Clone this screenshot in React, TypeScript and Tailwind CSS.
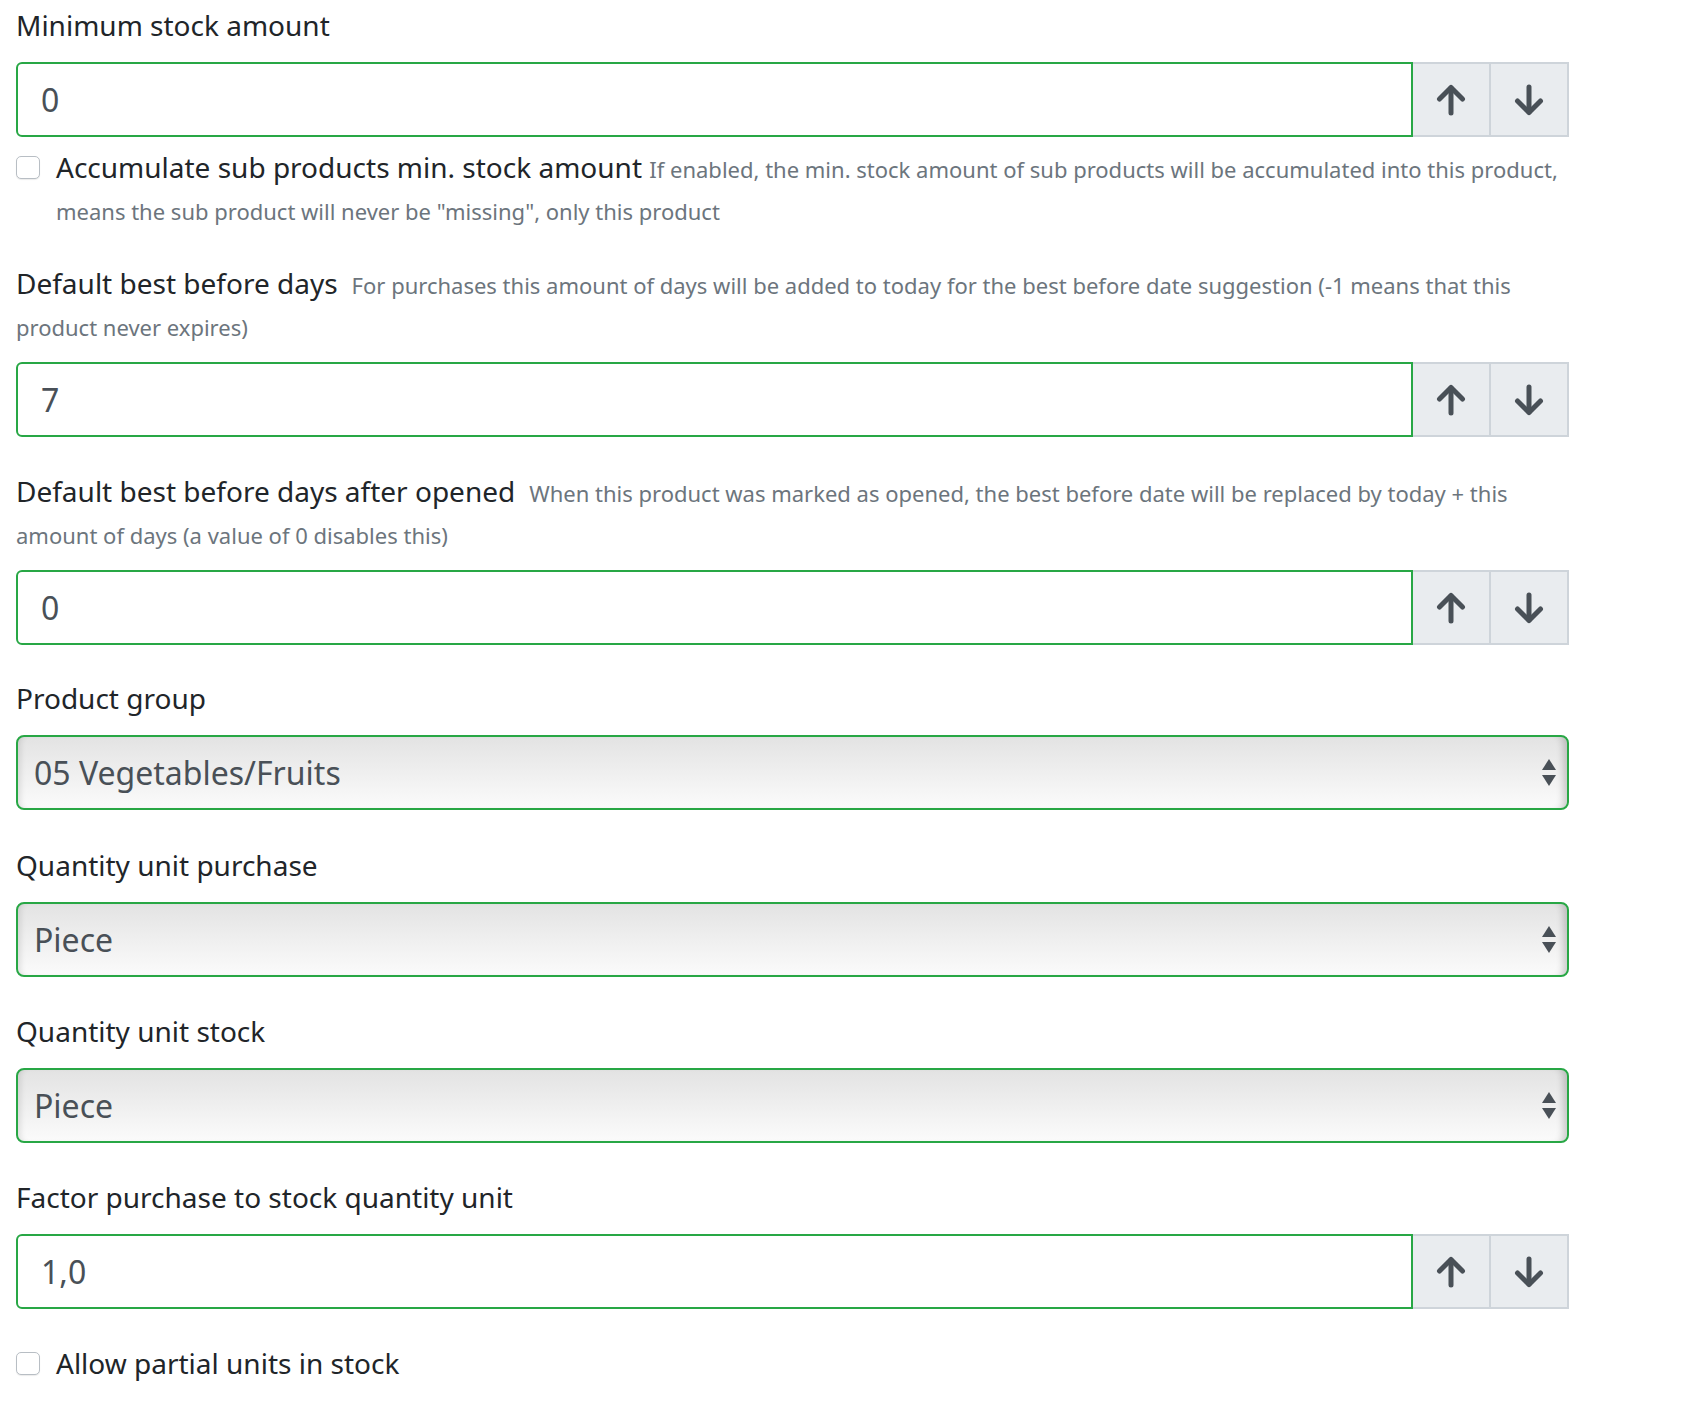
import React from 'react';

const font = { fontFamily: '"Noto Sans", "Open Sans", sans-serif' };

function ArrowUp() {
    return (
        <svg width="30" height="32" viewBox="0 0 30 32" fill="none" stroke="#495057" strokeWidth="5" strokeLinecap="round" strokeLinejoin="round">
            <path d="M3.5 15 15 3.5 26.5 15" />
            <path d="M15 4v25" />
        </svg>
    );
}

function ArrowDown() {
    return (
        <svg width="30" height="32" viewBox="0 0 30 32" fill="none" stroke="#495057" strokeWidth="5" strokeLinecap="round" strokeLinejoin="round">
            <path d="M3.5 17 15 28.5 26.5 17" />
            <path d="M15 3v25" />
        </svg>
    );
}

function NumberInput({ value }: { value: string }) {
    return (
        <div className="flex h-[75px] w-full">
            <div className="flex flex-1 items-center rounded-l-[6px] border-2 border-[#28a745] bg-white pl-[23px] text-[32px] text-[#495057]">
                {value}
            </div>
            <button className="flex w-[78px] items-center justify-center border-2 border-l-0 border-[#ced4da] bg-[#e9ecef]">
                <ArrowUp />
            </button>
            <button className="flex w-[78px] items-center justify-center border-2 border-l-0 border-[#ced4da] bg-[#e9ecef]">
                <ArrowDown />
            </button>
        </div>
    );
}

function SelectBox({ value }: { value: string }) {
    return (
        <div className="flex h-[75px] w-full items-center justify-between rounded-[8px] border-2 border-[#28a745] bg-gradient-to-b from-[#e3e3e3] to-[#fbfbfb] pl-[16px] pr-[10px] text-[32px] text-[#495057] shadow-[inset_7px_0_6px_-5px_rgba(0,0,0,0.12),inset_-9px_0_7px_-5px_rgba(0,0,0,0.18)]">
            <span>{value}</span>
            <svg width="16" height="30" viewBox="0 0 16 30" fill="#495057">
                <path d="M8 1 15 12H1z" />
                <path d="M1 17h14L8 28z" />
            </svg>
        </div>
    );
}

function Checkbox() {
    return <span className="mt-[10px] block h-[23px] w-[24px] shrink-0 rounded-[5px] border border-[#b8bec4] bg-white shadow-[0_1px_1px_rgba(0,0,0,0.08)]" />;
}

function Label({ text, help }: { text: string; help?: React.ReactNode }) {
    return (
        <div className="mb-[16px] text-[28px] leading-[42px] text-[#212529]">
            {text}
            {help && <span className="ml-[14px] text-[22px] leading-none text-[#6c757d]">{help}</span>}
        </div>
    );
}

export default function App() {
    return (
        <div className="min-h-screen bg-white" style={font}>
            <div className="w-[1569px] pl-4 pt-[4px]">
                <div className="mb-[32px]">
                    <Label text="Minimum stock amount" />
                    <NumberInput value="0" />
                    <div className="mt-[9px] flex gap-[16px]">
                        <Checkbox />
                        <div className="text-[28px] leading-[42px] text-[#212529]">
                            Accumulate sub products min. stock amount{' '}
                            <span className="text-[22px] leading-none text-[#6c757d]">
                                If enabled, the min. stock amount of sub products will be accumulated into this product, means the sub product will never be "missing", only this product
                            </span>
                        </div>
                    </div>
                </div>

                <div className="mb-[33px]">
                    <Label
                        text="Default best before days"
                        help="For purchases this amount of days will be added to today for the best before date suggestion (-1 means that this product never expires)"
                    />
                    <NumberInput value="7" />
                </div>

                <div className="mb-[32px]">
                    <Label
                        text="Default best before days after opened"
                        help="When this product was marked as opened, the best before date will be replaced by today + this amount of days (a value of 0 disables this)"
                    />
                    <NumberInput value="0" />
                </div>

                <div className="mb-[34px]">
                    <Label text="Product group" />
                    <SelectBox value="05 Vegetables/Fruits" />
                </div>

                <div className="mb-[33px]">
                    <Label text="Quantity unit purchase" />
                    <SelectBox value="Piece" />
                </div>

                <div className="mb-[33px]">
                    <Label text="Quantity unit stock" />
                    <SelectBox value="Piece" />
                </div>

                <div className="mb-[33px]">
                    <Label text="Factor purchase to stock quantity unit" />
                    <NumberInput value="1,0" />
                </div>

                <div className="flex gap-[16px]">
                    <Checkbox />
                    <div className="text-[28px] leading-[42px] text-[#212529]">Allow partial units in stock</div>
                </div>
            </div>
        </div>
    );
}
